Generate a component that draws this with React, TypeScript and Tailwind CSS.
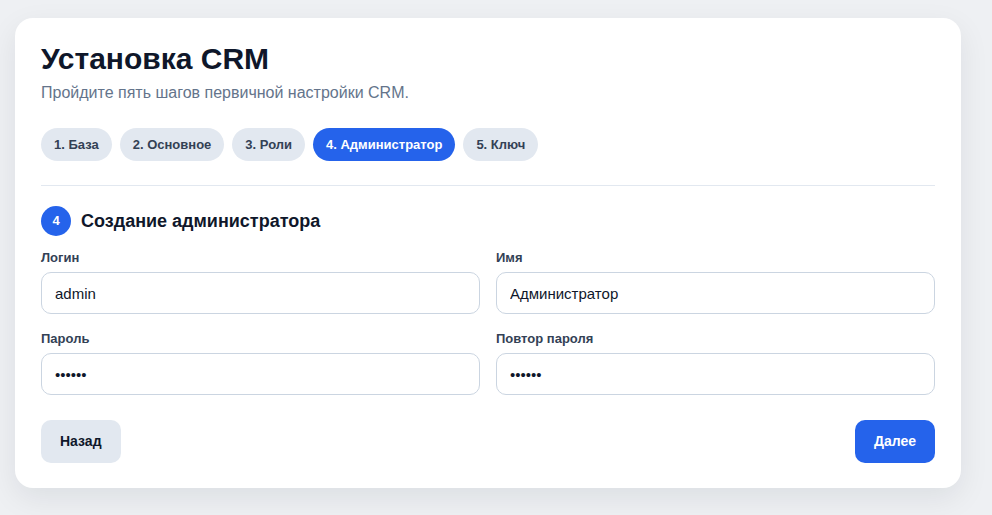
import { useState } from "react";

const steps = ["1. База", "2. Основное", "3. Роли", "4. Администратор", "5. Ключ"];

function Field({ label, value, type = "text" }: { label: string; value: string; type?: string }) {
  const [v, setV] = useState(value);
  return (
    <label className="flex flex-col">
      <span className="text-[13px] leading-[17px] font-bold text-[#334155] mb-1.5">{label}</span>
      <input
        type={type}
        value={v}
        onChange={(e) => setV(e.target.value)}
        className="h-[42px] rounded-[10px] border border-[#cbd5e1] bg-white pl-[13px] pr-3 text-[15px] text-[#0f172a] outline-none"
      />
    </label>
  );
}

export default function App() {
  const active = 3;
  return (
    <div
      className="min-h-[515px] bg-[#eef0f3] pt-[18px] pb-[26px] pl-[15px]"
      style={{ fontFamily: '"Liberation Sans", Arial, sans-serif' }}
    >
      <div className="w-[946px] rounded-[18px] bg-white px-[26px] pt-[23px] pb-[25px] shadow-[0_10px_30px_rgba(15,23,42,0.08)]">
        <h1 className="text-[30px] leading-[36px] font-bold text-[#0f172a]">Установка CRM</h1>
        <p className="mt-[4px] text-[16px] leading-[23px] text-[#64748b]">
          Пройдите пять шагов первичной настройки CRM.
        </p>

        {/* шаги */}
        <div className="mt-6 flex gap-2">
          {steps.map((s, i) => (
            <span
              key={s}
              className={
                i === active
                  ? "flex h-[33px] items-center rounded-full bg-[#2563eb] px-[13px] text-[13px] font-extrabold text-white"
                  : "flex h-[33px] items-center rounded-full bg-[#e2e8f0] px-[13px] text-[13px] font-extrabold text-[#334155]"
              }
            >
              {s}
            </span>
          ))}
        </div>

        <div className="mt-6 h-px bg-[#e2e8f0]" />

        <div className="mt-5 flex items-center gap-2.5">
          <span className="flex h-[30px] w-[30px] items-center justify-center rounded-full bg-[#2563eb] text-[13px] font-bold text-white">
            4
          </span>
          <h2 className="text-[18px] font-bold text-[#0f172a]">Создание администратора</h2>
        </div>

        <div className="mt-[13px] grid grid-cols-2 gap-x-4 gap-y-4">
          <Field label="Логин" value="admin" />
          <Field label="Имя" value="Администратор" />
          <Field label="Пароль" value="123456" type="password" />
          <Field label="Повтор пароля" value="123456" type="password" />
        </div>

        <div className="mt-[25px] flex justify-between">
          <button className="h-[43px] rounded-[10px] bg-[#e2e8f0] px-[19px] text-[14px] font-bold text-[#0f172a]">
            Назад
          </button>
          <button className="h-[43px] rounded-[10px] bg-[#2563eb] px-[19px] text-[14px] font-bold text-white">
            Далее
          </button>
        </div>
      </div>
    </div>
  );
}
